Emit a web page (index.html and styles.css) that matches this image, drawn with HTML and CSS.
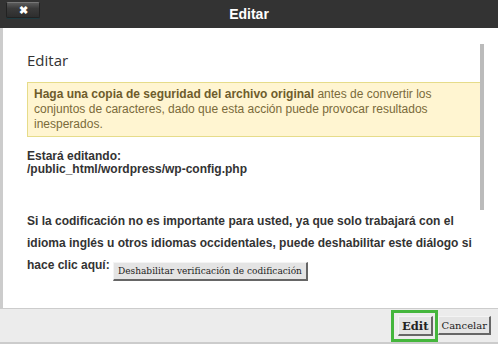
FILE: index.html
```html
<!DOCTYPE html>
<html lang="es">
<head>
    <meta charset="UTF-8">
    <meta name="viewport" content="width=device-width, initial-scale=1.0">
    <title>Editar</title>
    <link rel="stylesheet" href="styles.css">
</head>
<body>
    <div class="dialog">
        <div class="titlebar">
            <button class="close-button" title="Cerrar">&#x2716;</button>
            <span class="title">Editar</span>
            <span></span>
        </div>

        <div class="dialog-body">
            <div class="scrollbar"></div>
            <h2>Editar</h2>
            <div class="warning">
                <strong>Haga una copia de seguridad del archivo original</strong> antes de convertir los conjuntos de caracteres, dado que esta acción puede provocar resultados inesperados.
            </div>

            <p class="file">
                Estará editando:<br>
                /public_html/wordpress/wp-config.php
            </p>

            <p class="note">
                Si la codificación no es importante para usted, ya que solo trabajará con el idioma inglés u otros idiomas occidentales, puede deshabilitar este diálogo si hace clic aquí: <button class="plain-button inline-button">Deshabilitar verificación de codificación</button>
            </p>
        </div>

        <div class="footer">
            <span class="focus-ring"><button class="plain-button edit-button">Edit</button></span>
            <button class="plain-button">Cancelar</button>
        </div>
    </div>
</body>
</html>
```

FILE: styles.css
```css
body {
    margin: 0;
    font-family: 'Liberation Sans', Arial, sans-serif;
    background-color: #ffffff;
}
.dialog {
    width: 498px;
    height: 344px;
    display: flex;
    flex-direction: column;
}
.titlebar {
    height: 28px;
    background-color: #333333;
    display: grid;
    grid-template-columns: 1fr auto 1fr;
    align-items: center;
}
.close-button {
    justify-self: start;
    margin: 0 0 8px 6px;
    width: 34px;
    height: 16px;
    padding: 0;
    border: 1px solid #222;
    border-top-color: #777;
    border-radius: 2px;
    background: linear-gradient(#5a5a5a, #3a3a3a 40%, #2e2e2e);
    box-shadow: 0 1px 0 #1f3a40;
    color: #ffffff;
    font-size: 11px;
    line-height: 14px;
    font-weight: bold;
}
.title {
    color: #ffffff;
    font-weight: bold;
    font-size: 14px;
}
.dialog-body {
    flex: 1;
    position: relative;
    border-left: 3px solid #cccccc;
    padding: 22px 14px 0 24px;
    color: #333333;
}
.scrollbar {
    position: absolute;
    right: 14px;
    top: 16px;
    width: 4px;
    height: 166px;
    background-color: #bbbbbb;
}
h2 {
    font-family: 'Open Sans', sans-serif;
    font-weight: normal;
    font-size: 15px;
    line-height: 20px;
    margin: 0 0 12px;
    color: #333333;
}
.warning {
    background-color: #fff5d1;
    border: 1px solid #e6dc8a;
    color: #7a6a3a;
    font-size: 12px;
    line-height: 15px;
    padding: 4px 6px 4px;
}
.warning strong {
    color: #6e5c2c;
}
.file {
    font-size: 12px;
    font-weight: bold;
    line-height: 13px;
    margin: 13px 0 0;
}
.note {
    font-size: 12px;
    font-weight: bold;
    line-height: 22px;
    margin: 34px 0 0;
}
.plain-button {
    font-family: 'DejaVu Serif', serif;
    font-size: 10px;
    color: #222222;
    background-color: #e4e4e4;
    border: 1px solid #f4f4f4;
    border-right: 2px solid #666666;
    border-bottom: 2px solid #666666;
    padding: 3px 2px 2px;
}
.inline-button {
    font-size: 9px;
    padding: 3px 4px;
    vertical-align: -5px;
}
.footer {
    height: 36px;
    border-top: 1px solid #cccccc;
    border-bottom: 2px solid #cccccc;
    box-sizing: border-box;
    background-color: #ececec;
    display: flex;
    align-items: center;
    justify-content: flex-end;
    padding-right: 7px;
    gap: 0;
}
.focus-ring {
    border: 3px solid #44b63c;
    padding: 3px 2px 3px 4px;
    display: flex;
}
.edit-button {
    font-weight: bold;
    font-size: 11.5px;
    padding: 2px 3px 1px;
}
```
